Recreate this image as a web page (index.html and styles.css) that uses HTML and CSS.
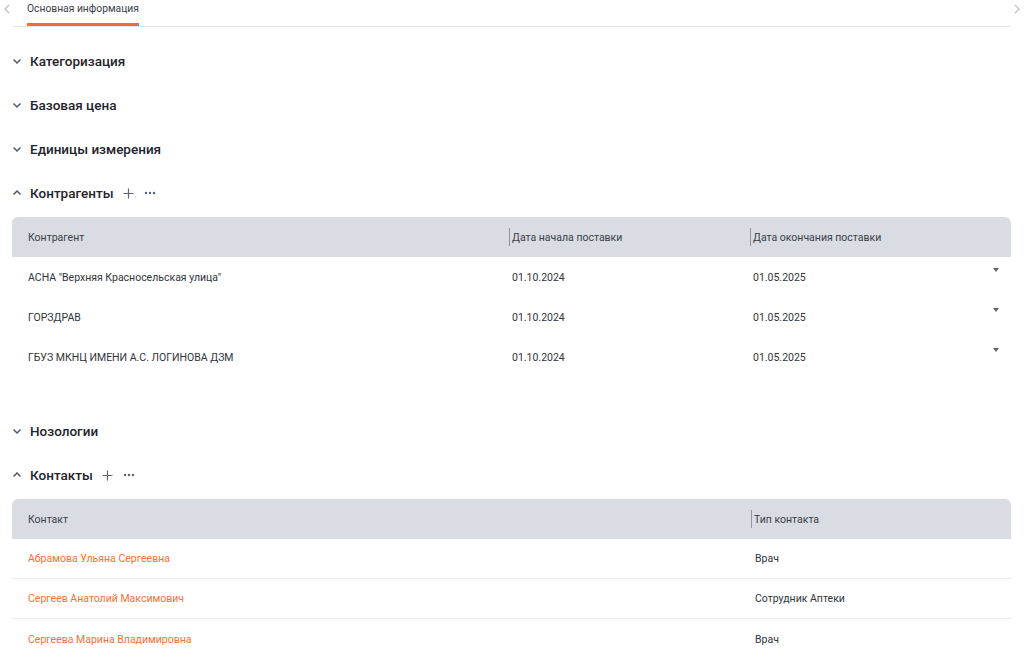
FILE: index.html
```html
<!DOCTYPE html>
<html lang="ru">
<head>
<meta charset="utf-8">
<link rel="stylesheet" href="styles.css">
</head>
<body>
<div class="tabs">
  <span class="tab-arrow">
    <svg width="6" height="10" viewBox="0 0 6 10"><path d="M5 1 1 5l4 4" fill="none" stroke="#b9bcc4" stroke-width="1.2"/></svg>
  </span>
  <div class="tab-track">
    <div class="tab active">Основная информация</div>
  </div>
  <span class="tab-arrow">
    <svg width="6" height="10" viewBox="0 0 6 10"><path d="M1 1l4 4-4 4" fill="none" stroke="#b9bcc4" stroke-width="1.2"/></svg>
  </span>
</div>

<main class="content">
  <section class="section">
    <div class="sec-head">
      <svg class="chev" width="10" height="10" viewBox="0 0 10 10"><path d="M1.5 3.5 5 7l3.5-3.5" fill="none" stroke="#4d566b" stroke-width="1.5"/></svg>
      <h2>Категоризация</h2>
    </div>
  </section>
  <section class="section">
    <div class="sec-head">
      <svg class="chev" width="10" height="10" viewBox="0 0 10 10"><path d="M1.5 3.5 5 7l3.5-3.5" fill="none" stroke="#4d566b" stroke-width="1.5"/></svg>
      <h2>Базовая цена</h2>
    </div>
  </section>
  <section class="section">
    <div class="sec-head">
      <svg class="chev" width="10" height="10" viewBox="0 0 10 10"><path d="M1.5 3.5 5 7l3.5-3.5" fill="none" stroke="#4d566b" stroke-width="1.5"/></svg>
      <h2>Единицы измерения</h2>
    </div>
  </section>
  <section class="section open">
    <div class="sec-head">
      <svg class="chev" width="10" height="10" viewBox="0 0 10 10"><path d="M1.5 6.5 5 3l3.5 3.5" fill="none" stroke="#4d566b" stroke-width="1.5"/></svg>
      <h2>Контрагенты</h2>
      <svg class="plus" width="11" height="11" viewBox="0 0 11 11"><path d="M5.5 0.5v10M0.5 5.5h10" stroke="#5b6478" stroke-width="1.2"/></svg>
      <svg class="dots" width="12" height="4" viewBox="0 0 12 4"><circle cx="2" cy="2" r="1.25" fill="#5b6478"/><circle cx="6" cy="2" r="1.25" fill="#5b6478"/><circle cx="10" cy="2" r="1.25" fill="#5b6478"/></svg>
    </div>
    <div class="table t-contr">
      <div class="thead">
        <div class="th first">Контрагент</div>
        <div class="th sep">Дата начала поставки</div>
        <div class="th sep">Дата окончания поставки</div>
      </div>
      <div class="tr">
        <div class="td first">АСНА "Верхняя Красносельская улица"</div>
        <div class="td">01.10.2024</div>
        <div class="td">01.05.2025</div>
        <span class="caret"></span>
      </div>
      <div class="tr">
        <div class="td first">ГОРЗДРАВ</div>
        <div class="td">01.10.2024</div>
        <div class="td">01.05.2025</div>
        <span class="caret"></span>
      </div>
      <div class="tr">
        <div class="td first">ГБУЗ МКНЦ ИМЕНИ А.С. ЛОГИНОВА ДЗМ</div>
        <div class="td">01.10.2024</div>
        <div class="td">01.05.2025</div>
        <span class="caret"></span>
      </div>
    </div>
  </section>
  <section class="section">
    <div class="sec-head">
      <svg class="chev" width="10" height="10" viewBox="0 0 10 10"><path d="M1.5 3.5 5 7l3.5-3.5" fill="none" stroke="#4d566b" stroke-width="1.5"/></svg>
      <h2>Нозологии</h2>
    </div>
  </section>
  <section class="section open">
    <div class="sec-head">
      <svg class="chev" width="10" height="10" viewBox="0 0 10 10"><path d="M1.5 6.5 5 3l3.5 3.5" fill="none" stroke="#4d566b" stroke-width="1.5"/></svg>
      <h2>Контакты</h2>
      <svg class="plus" width="11" height="11" viewBox="0 0 11 11"><path d="M5.5 0.5v10M0.5 5.5h10" stroke="#5b6478" stroke-width="1.2"/></svg>
      <svg class="dots" width="12" height="4" viewBox="0 0 12 4"><circle cx="2" cy="2" r="1.25" fill="#5b6478"/><circle cx="6" cy="2" r="1.25" fill="#5b6478"/><circle cx="10" cy="2" r="1.25" fill="#5b6478"/></svg>
    </div>
    <div class="table t-contacts">
      <div class="thead">
        <div class="th first">Контакт</div>
        <div class="th sep">Тип контакта</div>
      </div>
      <div class="tr lined">
        <div class="td first link">Абрамова Ульяна Сергеевна</div>
        <div class="td">Врач</div>
      </div>
      <div class="tr lined">
        <div class="td first link">Сергеев Анатолий Максимович</div>
        <div class="td">Сотрудник Аптеки</div>
      </div>
      <div class="tr lined">
        <div class="td first link">Сергеева Марина Владимировна</div>
        <div class="td">Врач</div>
      </div>
    </div>
  </section>
</main>
</body>
</html>
```

FILE: styles.css
```css
* { box-sizing: border-box; }

body {
  margin: 0;
  font-family: Roboto, "Noto Sans", sans-serif;
  color: #2f333b;
  background: #fff;
}

.tabs {
  display: flex;
  align-items: flex-start;
  height: 27px;
}

.tab-arrow {
  width: 12px;
  display: flex;
  justify-content: center;
  padding-top: 4px;
}
.tab-arrow:first-child { margin-left: 1px; padding-right: 1px; }
.tab-arrow:last-child { width: 14px; }

.tab-track {
  flex: 1;
  display: flex;
  border-bottom: 1px solid #e2e3e8;
  height: 27px;
}

.tab {
  margin-left: 14px;
  font-size: 10.3px;
  line-height: 14px;
  padding-top: 2px;
  height: 26px;
  color: #3a3e47;
  border-bottom: 3px solid transparent;
}
.tab.active { border-bottom-color: #f26c2e; }

.content {
  padding: 12px 13px 0 12px;
}

.sec-head {
  display: flex;
  align-items: center;
  height: 44px;
}

.chev { margin-right: 8px; flex: none; margin-top: -1px; }

.sec-head h2 {
  margin: 0;
  font-size: 13.5px;
  font-weight: 500;
  color: #1f232b;
}

.plus { margin-left: 9px; }
.dots { margin-left: 10px; }

.table { margin-top: 2px; }
.t-contr { margin-bottom: 32px; }

.thead, .tr {
  display: grid;
  position: relative;
}
.t-contr .thead, .t-contr .tr { grid-template-columns: 497px 241px 1fr; }
.t-contacts .thead, .t-contacts .tr { grid-template-columns: 739px 1fr; }

.thead {
  height: 40px;
  background: #d9dce3;
  border-radius: 6px 6px 0 0;
  align-items: center;
}

.th {
  font-size: 10.5px;
  color: #3a3e47;
  padding-left: 3px;
  position: relative;
}
.th.first { padding-left: 16px; }
.th.sep::before {
  content: "";
  position: absolute;
  left: 0;
  top: -3px;
  width: 1px;
  height: 18px;
  background: #8e939d;
}

.tr {
  height: 40px;
  align-items: center;
}
.tr.lined { border-bottom: 1px solid #ebecef; }
.tr.lined:last-child { border-bottom: none; }

.td {
  font-size: 10.5px;
  color: #30343c;
  padding-left: 3px;
}
.t-contacts .td { padding-left: 4px; }
.td.first { padding-left: 16px; }
.td.link { color: #f37136; }

.caret {
  position: absolute;
  right: 12px;
  top: 11px;
  width: 0;
  height: 0;
  border-left: 3.5px solid transparent;
  border-right: 3.5px solid transparent;
  border-top: 4px solid #5b6478;
}
```
